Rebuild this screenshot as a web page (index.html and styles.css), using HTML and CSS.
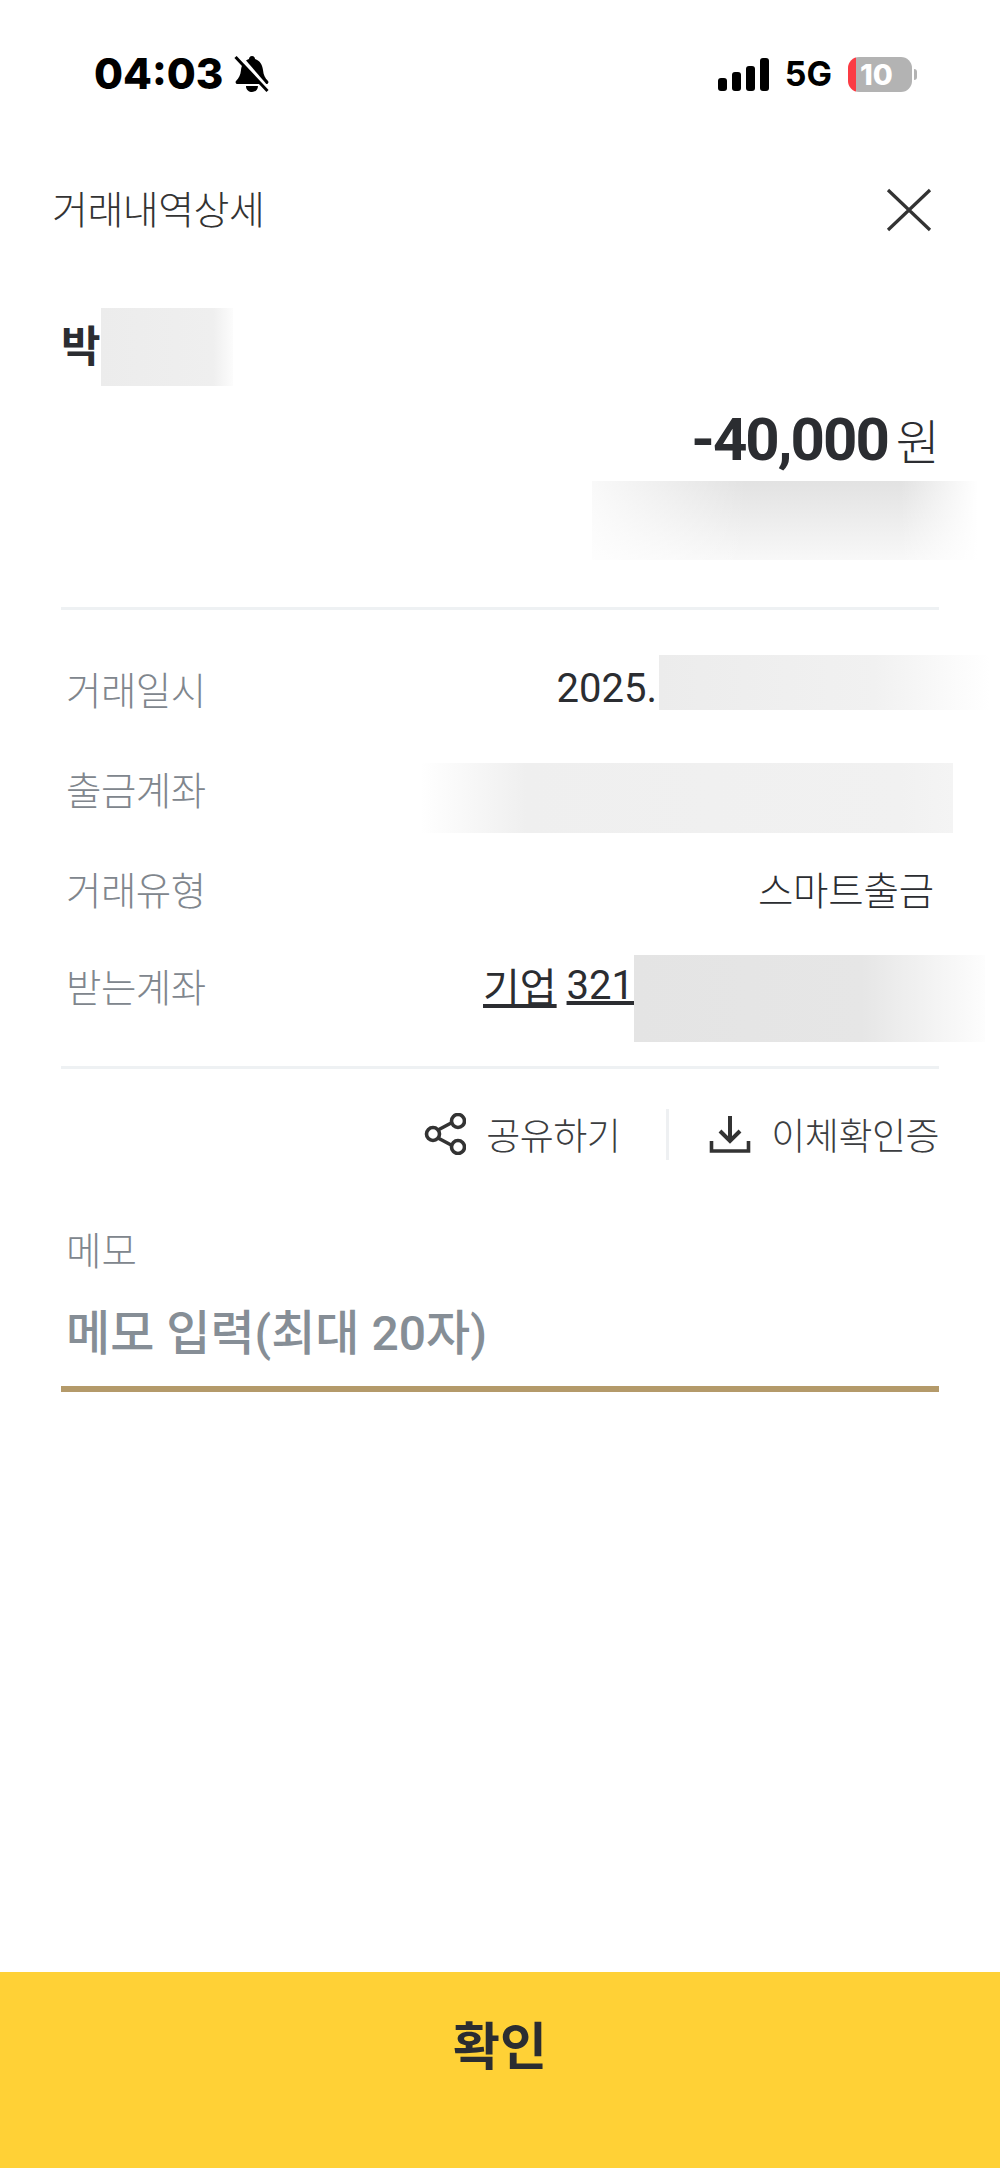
FILE: index.html
```html
<!DOCTYPE html>
<html lang="ko">
<head>
    <meta charset="UTF-8">
    <title>거래내역상세</title>
    <link rel="stylesheet" href="styles.css">
</head>
<body>
    <!--status bar-->
    <div class="status">
        <div class="status-left">
            <span class="time">04:03</span>
            <svg class="bell" viewBox="0 0 36 38" width="36" height="38">
                <path d="M18 1c2 0 3 1.500 3 3 5 1.500 7.500 6 8 11 .5 5 2 8 5 11 1 1.500 0 3-1.500 3H3.500C2 29 1 27.500 2 26c3-3 4.500-6 5-11 .5-5 3-9.500 8-11 0-1.500 1-3 3-3z" fill="#000"/>
                <path d="M12 31h12c0 4-3 6-6 6s-6-2-6-6z" fill="#000"/>
                <path d="M4 0l32 37" stroke="#fff" stroke-width="5" fill="none"/>
                <path d="M1.500 2l32 34" stroke="#000" stroke-width="3" fill="none"/>
            </svg>
        </div>
        <div class="status-right">
            <svg class="signal" viewBox="0 0 51 33" width="51" height="33">
                <rect x="0" y="20" width="9" height="13" rx="3"/>
                <rect x="14" y="14" width="9" height="19" rx="3"/>
                <rect x="28" y="8" width="9" height="25" rx="3"/>
                <rect x="42" y="0" width="9" height="33" rx="3"/>
            </svg>
            <span class="net">5G</span>
            <div class="battery"><span>10</span></div>
            <i class="battery-nub"></i>
        </div>
    </div>

    <!--title-->
    <div class="title-bar">
        <span class="title">거래내역상세</span>
        <svg class="close" viewBox="0 0 46 44" width="46" height="44">
            <path d="M2 2l42 40M44 2L2 42" stroke="#333" stroke-width="3.2" fill="none"/>
        </svg>
    </div>

    <div class="content">
        <div class="name-row">
            <span class="name">박</span>
            <div class="mask mask-name"></div>
        </div>
        <div class="amount-row">
            <span class="amount">-40,000</span>
            <span class="won">원</span>
        </div>
        <div class="mask mask-amount"></div>
        <div class="line first-line"></div>

        <!--detail rows-->
        <div class="rows">
            <div class="row">
                <span class="label">거래일시</span>
                <div class="value">2025.<div class="mask mask-date"></div></div>
            </div>
            <div class="row">
                <span class="label">출금계좌</span>
                <div class="value"><div class="mask mask-from"></div></div>
            </div>
            <div class="row">
                <span class="label">거래유형</span>
                <div class="value value-type">스마트출금</div>
            </div>
            <div class="row row-last">
                <span class="label">받는계좌</span>
                <div class="value"><u>기업</u>&nbsp;<u>321</u><div class="mask mask-to"></div></div>
            </div>
        </div>
        <div class="line second-line"></div>

        <!--share and receipt-->
        <div class="actions">
            <div class="action">
                <svg viewBox="0 0 42 42" width="42" height="42">
                    <path d="M14 17l15-8M14 25l15 8" stroke="#333" stroke-width="3.600" fill="none"/>
                    <circle cx="9" cy="21" r="6.500" stroke="#333" stroke-width="3.600" fill="none"/>
                    <circle cx="34" cy="8" r="6.500" stroke="#333" stroke-width="3.600" fill="none"/>
                    <circle cx="34" cy="34" r="6.500" stroke="#333" stroke-width="3.600" fill="none"/>
                </svg>
                <span>공유하기</span>
            </div>
            <div class="action-sep"></div>
            <div class="action">
                <svg viewBox="0 0 42 38" width="42" height="38">
                    <path d="M21 1v24M11 16l10 10 10-10" stroke="#333" stroke-width="4" fill="none"/>
                    <path d="M2.500 26v10h37V26" stroke="#333" stroke-width="3.600" fill="none"/>
                </svg>
                <span>이체확인증</span>
            </div>
        </div>

        <!--memo-->
        <div class="memo-label">메모</div>
        <div class="memo-input">메모 입력(최대 20자)</div>
    </div>

    <div class="confirm">확인</div>
</body>
</html>
```

FILE: styles.css
```css
*{
    margin: 0;
    padding: 0;
    box-sizing: border-box;
}
body{
    width: 1000px;
    height: 2168px;
    display: flex;
    flex-direction: column;
    background-color: #fff;
    color: #2b2d31;
    font-family: Roboto, "Noto Sans CJK KR", sans-serif;
    overflow: hidden;
}

/*status bar*/
.status{
    height: 150px;
    padding: 0 83px 2px 94px;
    display: flex;
    justify-content: space-between;
    align-items: center;
}
.status-left, .status-right{
    display: flex;
    align-items: center;
}
.time{
    font-family: Inter, sans-serif;
    font-weight: 800;
    font-size: 42px;
    line-height: 48px;
    color: #000;
}
.bell{
    margin-left: 11px;
}
.signal{
    fill: #000;
    margin-top: 1px;
}
.net{
    font-family: Inter, sans-serif;
    font-weight: 700;
    font-size: 34px;
    line-height: 36px;
    color: #000;
    margin-left: 16px;
}
.battery{
    width: 64px;
    height: 35px;
    margin-left: 16px;
    border-radius: 11px;
    background: linear-gradient(90deg, #fb3c44 8px, #b3b3b3 8px);
    color: #fff;
    font-family: Inter, sans-serif;
    font-weight: 800;
    font-size: 29px;
    line-height: 35px;
    padding-left: 12px;
}
.battery-nub{
    display: block;
    width: 3px;
    height: 11px;
    margin-left: 2px;
    border-radius: 0 3px 3px 0;
    background-color: #b3b3b3;
}

/*title*/
.title-bar{
    height: 120px;
    padding: 0 68px 0 52px;
    display: flex;
    justify-content: space-between;
    align-items: center;
}
.title{
    font-size: 39px;
    letter-spacing: -0.5px;
    font-weight: 300;
    color: #333;
    margin-top: -6px;
}

.content{
    padding: 0 61px;
    display: flex;
    flex-direction: column;
}

/*blurred patches*/
.mask{
    flex: none;
}
.name-row{
    height: 78px;
    margin-top: 38px;
    display: flex;
    align-items: center;
}
.name{
    font-size: 43px;
    font-weight: 700;
    width: 40px;
    line-height: 78px;
}
.mask-name{
    width: 132px;
    height: 78px;
    background: linear-gradient(90deg, #ececec, #efefef 85%, #fcfcfc);
}
.amount-row{
    height: 60px;
    margin-top: 24px;
    display: flex;
    justify-content: flex-end;
    align-items: baseline;
}
.amount{
    font-size: 60px;
    font-weight: 700;
    letter-spacing: -2px;
    line-height: 60px;
}
.won{
    font-size: 48px;
    font-weight: 300;
    margin: 0 -1px 0 8px;
    line-height: 60px;
}
.mask-amount{
    width: 386px;
    height: 79px;
    margin: 11px -39px 0 auto;
    background:
        linear-gradient(90deg, rgba(255,255,255,.8), rgba(255,255,255,0) 40%, rgba(255,255,255,0) 80%, #fff),
        linear-gradient(180deg, #e2e2e2, #f8f8f8);
}
.line{
    height: 3px;
    background-color: #eef1f3;
}
.first-line{
    margin-top: 47px;
}
.rows{
    margin-top: 28px;
    padding: 0 0 0 5px;
}
.row{
    height: 100px;
    display: flex;
    justify-content: space-between;
    align-items: center;
}
.row-last{
    margin-top: -3px;
}
.label{
    font-size: 38.5px;
    font-weight: 300;
    letter-spacing: -0.5px;
    color: #80868d;
}
.value{
    display: flex;
    align-items: center;
    font-size: 40px;
    font-weight: 400;
    color: #2b2d31;
    white-space: pre;
}
.value-type{
    font-weight: 300;
    font-size: 38.5px;
    letter-spacing: -0.2px;
    margin-right: 5px;
}
.mask-date{
    width: 331px;
    height: 55px;
    margin: -12px -51px 0 2px;
    background: linear-gradient(90deg, #ececec, #f1f1f1 65%, #fff);
}
.mask-from{
    width: 533px;
    height: 70px;
    margin: 20px -14px 0 0;
    background: linear-gradient(90deg, #fff, #efefef 20%, #f1f1f1 90%, #f4f4f4);
}
.mask-to{
    width: 351px;
    height: 87px;
    margin: 26px -46px 0 0;
    background: linear-gradient(90deg, #e4e4e4, #e6e6e6 65%, #fdfdfd);
}
.second-line{
    margin-top: 31px;
}

/*share and receipt*/
.actions{
    height: 100px;
    margin-top: 15px;
    display: flex;
    justify-content: flex-end;
    align-items: center;
}
.action{
    display: flex;
    align-items: center;
    gap: 20px;
    font-size: 37px;
    font-weight: 300;
    letter-spacing: -0.5px;
    color: #3b3d40;
}
.action-sep{
    width: 3px;
    height: 51px;
    margin: 0 40px 0 46px;
    background-color: #eef0f2;
}

/*memo*/
.memo-label{
    margin-top: 43px;
    padding-left: 5px;
    font-size: 38.5px;
    font-weight: 300;
    line-height: 50px;
    color: #80868d;
}
.memo-input{
    margin-top: 25px;
    padding: 0 5px 24px;
    height: 90px;
    border-bottom: 6px solid #b49a6a;
    font-size: 48px;
    font-weight: 500;
    line-height: 63px;
    color: #868e96;
}

.confirm{
    margin-top: auto;
    height: 196px;
    padding-top: 26px;
    background-color: #ffd136;
    text-align: center;
    font-size: 51px;
    font-weight: 700;
    line-height: 100px;
    color: #2b2d31;
}
```
